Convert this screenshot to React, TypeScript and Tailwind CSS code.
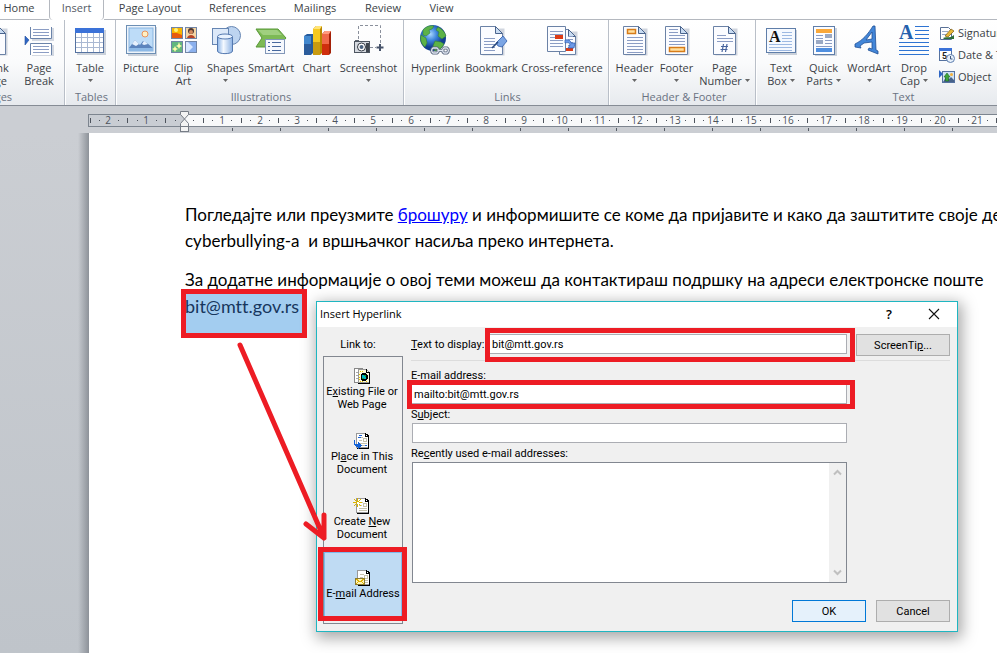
import type { ReactNode } from 'react';

function Svg({ children, w = 32 }: { children: ReactNode; w?: number }) {
  return (
    <svg width={w} height="32" viewBox={`0 0 ${w} 32`} className="shrink-0" aria-hidden="true">
      {children}
    </svg>
  );
}

function Sheet({ x = 5, y = 2, w = 22, h = 28 }: { x?: number; y?: number; w?: number; h?: number }) {
  return (
    <g transform="translate(-.5 .5)">
      <path d={`M${x + 2} ${y + 2}h${w}v${h - 1}h-${w}z`} fill="#9aa5b8" opacity=".45" />
      <path d={`M${x} ${y}h${w - 7}l7 7v${h - 7}h-${w}z`} fill="#fbfcff" stroke="#6b82a6" />
      <path d={`M${x + w - 7} ${y}v7h7z`} fill="#c9dcf2" stroke="#4a648d" />
    </g>
  );
}

function Lines({ x, y, w, n, gap = 3, c = '#8b9dc4' }: { x: number; y: number; w: number; n: number; gap?: number; c?: string }) {
  return (
    <g fill={c}>
      {Array.from({ length: n }, (_, i) => (
        <rect key={i} x={x} y={y + i * gap} width={w} height="1" />
      ))}
    </g>
  );
}

const icons = {
  blank: (
    <Svg><Sheet /></Svg>
  ),
  pageBreak: (
    <Svg>
      <rect x="9" y="4" width="22" height="13" fill="#a9b4c6" opacity=".5" />
      <rect x="9" y="21" width="22" height="11" fill="#a9b4c6" opacity=".5" />
      <path d="M7.500 3v11.500h21V3" fill="#fff" stroke="#6b84aa" />
      <Lines x={10} y={5} w={16} n={3} />
      <path d="M7.500 31V19.500h21V31" fill="#fff" stroke="#6b84aa" />
      <Lines x={10} y={22} w={16} n={3} />
      <path d="M2 12l4 4-4 5z" fill="#2f66c4" stroke="#1e4ea0" strokeWidth=".6" />
    </Svg>
  ),
  table: (
    <Svg>
      <rect x="3" y="6" width="29" height="25" fill="#9aa5b8" opacity=".5" />
      <rect x="1.500" y="4.500" width="28" height="24" fill="#fff" stroke="#5572a0" />
      <rect x="1" y="4" width="29" height="5" fill="#3b72d8" />
      <path d="M7.500 9v19M13.500 9v19M19.500 9v19M25.500 9v19M2 13.500h27M2 18.500h27M2 23.500h27" stroke="#a9b8d2" />
    </Svg>
  ),
  picture: (
    <Svg>
      <rect x="3" y="3" width="29" height="29" fill="#9aa5b8" opacity=".5" />
      <rect x="1.500" y="1.500" width="29" height="28" fill="#eef4fb" stroke="#6d8fb4" />
      <rect x="4" y="4" width="24" height="23" fill="#bddcf8" stroke="#88b4df" />
      <circle cx="20" cy="10" r="3" fill="#fff0c4" stroke="#e8935c" />
      <path d="M4 24l6-8 5 5 3-4 4 2 6 5v2H4z" fill="#5c84bd" />
      <path d="M7 20l3-4 4 4-3 2zM17 20l2-3 4 3-4 1z" fill="#e7f1fd" />
      <rect x="4" y="24" width="24" height="3" fill="#8db9e6" />
    </Svg>
  ),
  clipArt: (
    <Svg>
      <rect x="3.500" y="3.500" width="11" height="11" fill="#f8b500" stroke="#7185a6" />
      <path d="M4 9h5l5 2v3H4z" fill="#e65a10" /><circle cx="8" cy="6" r="2" fill="#fff27a" />
      <rect x="17.500" y="3.500" width="11" height="11" fill="#f5d6a4" stroke="#7185a6" />
      <circle cx="23" cy="7" r="3" fill="#4b3630" /><circle cx="23" cy="8" r="2" fill="#d48a5e" /><path d="M19 14c1-4 7-4 8 0z" fill="#b84225" />
      <rect x="3.500" y="17.500" width="11" height="11" fill="#63b77e" stroke="#7185a6" />
      <path d="M11 18l1 3 2 1-2 1-1 2-1-2-2-1 2-1zM7 22l1 2 2 1-2 1-1 2-1-2-2-1 2-1z" fill="#fffcaa" />
      <rect x="17.500" y="17.500" width="11" height="11" fill="#d7e7ff" stroke="#7185a6" />
      <path d="M20 18l5 5-5 5h8V18z" fill="#8bb0ed" />
    </Svg>
  ),
  shapes: (
    <Svg>
      <defs>
        <linearGradient id="cyl"><stop stopColor="#8db5e8" /><stop offset=".4" stopColor="#f4f9ff" /><stop offset="1" stopColor="#8eb3e4" /></linearGradient>
      </defs>
      <circle cx="21.500" cy="11.500" r="9" fill="#bdd4f0" stroke="#6686b3" />
      <rect x="2.500" y="4.500" width="16" height="16" fill="#dce9f9" stroke="#6686b3" />
      <path d="M7.500 13v14c0 3.500 15 3.500 15 0V13z" fill="url(#cyl)" stroke="#5479b0" />
      <ellipse cx="15" cy="12.500" rx="7.500" ry="2.500" fill="#e8f2fe" stroke="#5479b0" />
    </Svg>
  ),
  smartArt: (
    <Svg>
      <path d="M1 5h22l8 9-8 9H1l6-9z" fill="#7dba55" stroke="#599838" />
      <path d="M3 6h19l5 5H8z" fill="#a9d68a" opacity=".8" />
      <rect x="10.500" y="15.500" width="19" height="14" fill="#f5f8fd" stroke="#8297b8" />
      <Lines x={17} y={18} w={9} n={3} gap={4} c="#47689e" />
      <Lines x={13} y={18} w={2} n={3} gap={4} c="#47689e" />
    </Svg>
  ),
  chart: (
    <Svg>
      <path d="M3 12l3-2h6v19l-2 2H3z" fill="#245a9c" /><path d="M3 12h7v19H3z" fill="#4288ce" /><path d="M3 20h7v11H3z" fill="#2b5c9b" />
      <path d="M12 5l3-3h6v27l-2 2h-7z" fill="#b98600" /><path d="M12 5h7v26h-7z" fill="#f6c91f" /><path d="M12 18h7v13h-7z" fill="#c99b10" /><path d="M12 5l3-3h6l-2 3z" fill="#ffe476" />
      <path d="M21 10l3-3h6v22l-2 2h-7z" fill="#a32007" /><path d="M21 10h7v21h-7z" fill="#f0694a" /><path d="M21 20h7v11h-7z" fill="#cf2e0d" /><path d="M21 10l3-3h6l-2 3z" fill="#ff9b7f" />
    </Svg>
  ),
  screenshot: (
    <Svg>
      <path d="M5.500 15V1.500h22V20M17 23.500h6" fill="none" stroke="#8a909c" strokeDasharray="3 2" />
      <path d="M27 20v7M23.500 23.500h7" stroke="#46536a" strokeWidth="2" />
      <rect x="2" y="16" width="4" height="2" fill="#5f6670" />
      <rect x="1.500" y="17.500" width="15" height="11" fill="#d6dae0" stroke="#4d5560" />
      <rect x="13" y="19" width="3" height="9" fill="#3f464f" />
      <circle cx="8.500" cy="23" r="4" fill="#fff" stroke="#333a44" /><circle cx="8.500" cy="23" r="2" fill="#49617e" />
    </Svg>
  ),
  hyperlink: (
    <Svg>
      <defs>
        <radialGradient id="globe" cx=".4" cy=".35"><stop stopColor="#a9d7ff" /><stop offset=".5" stopColor="#3c84dc" /><stop offset="1" stopColor="#123f92" /></radialGradient>
      </defs>
      <circle cx="13" cy="14" r="13" fill="url(#globe)" />
      <path d="M3 6c3-4 8-5 11-4l-2 3-3 1 1 3-4 3-3-1zM1 11l5 3 1 5-2 4C1 20 0 15 1 11zM18 3c4 2 7 5 8 9l-4 3-4-3 1-4-3-2zM15 17l6 1 3 2c-2 4-5 6-9 7l-2-5z" fill="#5cb247" stroke="#2f7d2e" strokeWidth=".5" />
      <g fill="none" strokeLinecap="round">
        <path d="M13 24h4a3 3 0 010 5h-4a3 3 0 010-5zM24 24h3a3 3 0 010 5h-3a3 3 0 010-5zM18 26.500h5" stroke="#56637a" strokeWidth="3" />
        <path d="M13 24h4a3 3 0 010 5h-4a3 3 0 010-5zM24 24h3a3 3 0 010 5h-3a3 3 0 010-5zM18 26.500h5" stroke="#dfe6f2" strokeWidth="1.300" />
      </g>
    </Svg>
  ),
  bookmark: (
    <Svg>
      <Sheet x={5} />
      <Lines x={8} y={14} w={11} n={5} />
      <path d="M20 19l7-7 4 5-5 6-4-1z" fill="#7ba5e4" stroke="#2e5ba8" strokeWidth=".8" />
      <path d="M16 24l6-6" stroke="#27477d" strokeWidth="1.600" />
    </Svg>
  ),
  crossRef: (
    <Svg>
      <Sheet x={14} y={5} w={16} h={25} />
      <Lines x={22} y={12} w={5} n={4} />
      <rect x="20" y="24" width="7" height="3" fill="#dc3b16" />
      <path d="M1.500 2.500h18v25h-18z" fill="#fbfcff" stroke="#6b82a6" />
      <Lines x={4} y={7} w={13} n={6} />
      <rect x="9" y="11" width="8" height="4" fill="#dc3b16" />
      <path d="M19 16c5-1 6 2 6 3h4l-1 5h-6l2-3c0-2-2-3-5-2z" fill="#6d9ae8" stroke="#2c5bb0" strokeWidth=".7" />
    </Svg>
  ),
  header: (
    <Svg>
      <Sheet /><rect x="8.500" y="5.500" width="8" height="4" fill="#ffdf9e" stroke="#d67b18" strokeWidth="1.500" />
      <Lines x={8} y={13} w={16} n={6} />
    </Svg>
  ),
  footer: (
    <Svg>
      <Sheet /><Lines x={8} y={5} w={9} n={2} /><Lines x={8} y={11} w={16} n={4} />
      <rect x="8.500" y="23.500" width="15" height="4" fill="#ffdf9e" stroke="#d67b18" strokeWidth="1.500" />
    </Svg>
  ),
  pageNumber: (
    <Svg>
      <Sheet /><Lines x={8} y={11} w={9} n={1} /><Lines x={8} y={14} w={16} n={2} />
      <path d="M14.500 20l-1.500 8M18 20l-1.500 8M12 22.500h7M11.500 25.500h7" stroke="#49659e" strokeWidth="1.200" />
    </Svg>
  ),
  textBox: (
    <Svg>
      <rect x="3" y="6" width="29" height="25" fill="#9aa5b8" opacity=".5" />
      <rect x="1.500" y="4.500" width="29" height="24" fill="#f5f9ff" stroke="#5f7ea9" />
      <text x="4" y="18" className="font-['Liberation_Serif'] text-[16px] font-bold" fill="#111">A</text>
      <Lines x={17} y={8} w={10} n={4} c="#9db9e2" /><Lines x={4} y={20} w={23} n={3} c="#9db9e2" />
    </Svg>
  ),
  quickParts: (
    <Svg>
      <rect x="7" y="4" width="22" height="28" fill="#9aa5b8" opacity=".5" />
      <rect x="5.500" y="2.500" width="21" height="28" fill="#fbfcff" stroke="#5f7ea9" />
      <rect x="8" y="5" width="16" height="4" fill="#f9a83a" />
      <Lines x={8} y={11} w={7} n={2} /><rect x="17" y="10" width="7" height="4" fill="#9aa9c4" />
      <rect x="8" y="16" width="7" height="4" fill="#9aa9c4" /><Lines x={17} y={16} w={7} n={2} />
      <Lines x={8} y={22} w={16} n={1} /><rect x="8" y="24" width="16" height="4" fill="#4f8fe0" />
    </Svg>
  ),
  wordArt: (
    <Svg>
      <path d="M2 20c8-4 13-10 18-18h2l1 24 2 1v3l-10-4 1-2 3 1v-7l-8 1-4 3 1 2-6-1zM13 16l6-1V8z" fill="#4286d8" fillRule="evenodd" stroke="#1f4f96" strokeWidth=".8" />
    </Svg>
  ),
  dropCap: (
    <Svg>
      <text x="1" y="15" className="font-['Liberation_Serif'] text-[20px] font-bold" fill="#2460ad">A</text>
      <Lines x={17} y={2} w={14} n={4} gap={4} c="#2e74d2" /><Lines x={1} y={18} w={30} n={4} gap={4} c="#2e74d2" />
    </Svg>
  ),
};

function Caret() {
  return (
    <svg width="5" height="3" viewBox="0 0 5 3" className="shrink-0" aria-hidden="true">
      <path d="M0 0h5L2.500 3z" fill="#666" />
    </svg>
  );
}

type Tool = { icon: ReactNode; top: string; bottom?: string; menu?: boolean; width: string };

function ToolButton({ icon, top, bottom, menu, width }: Tool) {
  return (
    <button type="button" className={`${width} flex shrink-0 flex-col items-center whitespace-nowrap leading-[13px]`}>
      {icon}
      <span className="mt-[5px]">{top}</span>
      {(bottom || menu) && (
        <span className="flex h-[13px] items-center gap-[3px]">
          {bottom}
          {menu && <Caret />}
        </span>
      )}
    </button>
  );
}

function Group({ name, tools, className, children }: { name: string; tools: Tool[]; className: string; children?: ReactNode }) {
  return (
    <section aria-label={name} className={`${className} flex shrink-0 flex-col justify-between border-r border-[#b9bfc8] pb-[2px] pt-1 shadow-[1px_0_0_#fff]`}>
      <div className="flex">
        {tools.map((t) => <ToolButton key={t.top + t.bottom} {...t} />)}
        {children}
      </div>
      <h2 className="text-center leading-[13px] text-[#6a7282]">{name}</h2>
    </section>
  );
}

const tabs = [
  { name: 'Home', width: 'w-[49px] pr-[11px]' },
  { name: 'Insert', width: 'w-[55px]' },
  { name: 'Page Layout', width: 'w-[92px]' },
  { name: 'References', width: 'w-[83px]' },
  { name: 'Mailings', width: 'w-[72px]' },
  { name: 'Review', width: 'w-[64px]' },
  { name: 'View', width: 'w-[53px]' },
];

function Ribbon() {
  return (
    <header className="text-[11px] text-[#3b3f46]">
      <nav className="flex h-5 bg-white leading-4" aria-label="Ribbon tabs">
        {tabs.map((t) => (
          <button
            type="button"
            key={t.name}
            className={`${t.width} shrink-0 pb-1 text-center ${t.name === 'Insert' ? 'rounded-b-sm border-x border-[#b4b8bf] text-[#555b66]' : 'border-b border-[#b4b8bf]'}`}
          >
            {t.name}
          </button>
        ))}
        <div className="grow border-b border-[#b4b8bf]" />
      </nav>
      <div className="flex h-[86px] overflow-hidden border-b border-[#868c95] bg-gradient-to-b from-white via-[#fafbfc] to-[#e7eaee]">
        <Group name="Pages" className="-ml-[67px] w-[132px] pr-[3px] [&>div]:justify-end" tools={[
          { icon: icons.blank, top: 'Blank', bottom: 'Page', width: 'w-[45px]' },
          { icon: icons.pageBreak, top: 'Page', bottom: 'Break', width: 'w-[44px]' },
        ]} />
        <Group name="Tables" className="w-[51px] pl-[3px]" tools={[{ icon: icons.table, top: 'Table', menu: true, width: 'w-[44px]' }]} />
        <Group name="Illustrations" className="w-[288px] pl-[3px]" tools={[
          { icon: icons.picture, top: 'Picture', width: 'w-[44px]' },
          { icon: icons.clipArt, top: 'Clip', bottom: 'Art', width: 'w-[41px]' },
          { icon: icons.shapes, top: 'Shapes', menu: true, width: 'w-[43px]' },
          { icon: icons.smartArt, top: 'SmartArt', width: 'w-[48px]' },
          { icon: icons.chart, top: 'Chart', width: 'w-[43px]' },
          { icon: icons.screenshot, top: 'Screenshot', menu: true, width: 'w-[61px]' },
        ]} />
        <Group name="Links" className="w-[205px] pl-[3px]" tools={[
          { icon: icons.hyperlink, top: 'Hyperlink', width: 'w-[57px]' },
          { icon: icons.bookmark, top: 'Bookmark', width: 'w-[55px]' },
          { icon: icons.crossRef, top: 'Cross-reference', width: 'w-[86px]' },
        ]} />
        <Group name="Header & Footer" className="w-[147px] pl-1" tools={[
          { icon: icons.header, top: 'Header', menu: true, width: 'w-[43px]' },
          { icon: icons.footer, top: 'Footer', menu: true, width: 'w-[41px]' },
          { icon: icons.pageNumber, top: 'Page', bottom: 'Number', menu: true, width: 'w-[55px]' },
        ]} />
        <Group name="Text" className="w-[292px] pl-1" tools={[
          { icon: icons.textBox, top: 'Text', bottom: 'Box', menu: true, width: 'w-[42px]' },
          { icon: icons.quickParts, top: 'Quick', bottom: 'Parts', menu: true, width: 'w-[43px]' },
          { icon: icons.wordArt, top: 'WordArt', menu: true, width: 'w-[48px]' },
          { icon: icons.dropCap, top: 'Drop', bottom: 'Cap', menu: true, width: 'w-[42px]' },
        ]}>
          <div className="ml-1 flex flex-col whitespace-nowrap leading-[22px]">
            <button type="button" className="-mt-[2px] flex h-[22px] items-center gap-[3px]">
              <svg width="16" height="16" viewBox="0 0 16 16" aria-hidden="true">
                <path d="M1.500 2.500h8l3 3v9h-11z" fill="#fff" stroke="#5a7196" /><path d="M3 6.500h6M3 9.500h5" stroke="#9aaac6" />
                <path d="M6 11l6-7 3 2-6 6z" fill="#e9b838" stroke="#7a5a14" strokeWidth=".7" /><path d="M4 13c3-2 6 1 11-3v4H5z" fill="#2e6d38" />
              </svg>
              Signature Line
            </button>
            <button type="button" className="flex h-[22px] items-center gap-[3px]">
              <svg width="16" height="16" viewBox="0 0 16 16" aria-hidden="true">
                <rect x=".500" y="1.500" width="12" height="12" fill="#fff" stroke="#5572a0" /><rect y="1" width="13" height="3" fill="#3b72d8" />
                <text x="3" y="12" className="font-['Roboto'] text-[9px] font-bold" fill="#222">5</text>
                <circle cx="11.500" cy="11.500" r="4" fill="#e6f0fb" stroke="#5f7fae" /><path d="M11.500 9v3h2" fill="none" stroke="#41587f" />
              </svg>
              Date &amp; Time
            </button>
            <button type="button" className="flex h-[22px] items-center gap-[3px]">
              <svg width="16" height="16" viewBox="0 0 16 16" aria-hidden="true">
                <rect x="3.500" y="2.500" width="12" height="11" fill="#cfe2f5" stroke="#5572a0" /><path d="M4 13l3-5 3 2 2-2 3 3v2z" fill="#47628a" />
                <circle cx="12.500" cy="5.500" r="1.500" fill="#f5b13c" /><path d="M0 1l4 4-4 4z" fill="#2f66c4" /><path d="M8 4l3 4H9.500v4h-3V8H5z" fill="#3fa53a" stroke="#1d6b22" strokeWidth=".6" />
              </svg>
              Object
            </button>
          </div>
        </Group>
      </div>
    </header>
  );
}

const CM = 37.78;

function Ruler() {
  const origin = 96;
  const quarters = Array.from({ length: 100 }, (_, i) => i - 10);
  return (
    <div className="flex h-[27px] shrink-0 overflow-hidden pl-[88px] pt-1">
      <svg width="1400" height="23" className="shrink-0" role="img" aria-label="Ruler">
        <rect x=".500" y="4.500" width="1398" height="12" fill="#f8f9fa" stroke="#7d858f" />
        <rect x="1" y="5" width="95" height="11" fill="#c9cdd3" />
        {quarters.map((q) => {
          const x = Math.round(origin + (q * CM) / 4);
          if (q === 0) return null;
          if (q % 4 === 0)
            return (
              <text key={q} x={x} y="14" textAnchor="middle" fill="#4d535c" className="font-['Open_Sans'] text-[10px]">
                {Math.abs(q / 4)}
              </text>
            );
          return q % 2 === 0 ? (
            <rect key={q} x={x} y="8" width="1" height="5" fill="#4d535c" />
          ) : (
            <rect key={q} x={x} y="10" width="1" height="1" fill="#4d535c" />
          );
        })}
        {Array.from({ length: 24 }, (_, i) => (
          <rect key={i} x={144 + i * 48} y="18" width="1" height="3" fill="#555b64" />
        ))}
        <g fill="#f3f3f3" stroke="#777d86">
          <path d="M92.500 1.500h8v3l-4 4.500-4-4.500z" />
          <path d="M92.500 16.500v-3l4-4.500 4 4.500v3z" />
          <rect x="92.500" y="16.500" width="8" height="5" />
        </g>
      </svg>
    </div>
  );
}

function Mark({ inset }: { inset: string }) {
  return <span className={`${inset} pointer-events-none absolute z-10 border-[5px] border-[#ed1c24]`} />;
}

function MiniDoc({ children }: { children?: ReactNode }) {
  return (
    <svg width="18" height="16" viewBox="0 0 18 16" shapeRendering="crispEdges" aria-hidden="true">
      <path d="M3.500 .500h9l3 3v11h-12z" fill="#fff" stroke="#999" />
      <path d="M15.500 4v12M4 15.500h12" fill="none" stroke="#000" />
      <path d="M12.500 0v3.500h3M13.500 1l2 2" fill="none" stroke="#000" />
      <path d="M6 4.500h4M6 7.500h3M6 10.500h8M6 12.500h8" stroke="#c6c2ac" />
      <path d="M10.500 5.500h3v3h-3z" fill="none" stroke="#c6c2ac" />
      {children}
    </svg>
  );
}

const places = [
  {
    id: 'file',
    label: <>E<u>x</u>isting File or<br />Web Page</>,
    icon: (
      <svg width="18" height="16" viewBox="0 0 18 16" shapeRendering="crispEdges" aria-hidden="true">
        <path d="M1.500 .500h8v14h-8z" fill="#fff" stroke="#888" /><path d="M3 4.500h3M3 7.500h3M3 10.500h3" stroke="#aaa" />
        <path d="M5.500 1.500h8l3 3v10h-11z" fill="#fffbdc" stroke="#999" /><path d="M16.500 5v11M5 15.500h12M13.500 1v3.500h3" fill="none" stroke="#000" />
        <path d="M9 5h4v1h1v1h1v4h-1v1h-1v1H9v-1H8V6h1z" fill="#000" /><path d="M9 7h3v2h1v2h-2v-1H9z" fill="#00b7c8" /><path d="M11 7h2v2h-1zM9 10h2v1H9z" fill="#1ba334" />
        <path d="M7 3.500h1M9 3.500h1M7 13.500h1M9 13.500h1M13 13.500h1M6 6.500h1M6 9.500h1M6 11.500h1" stroke="#e8c400" />
      </svg>
    ),
  },
  {
    id: 'place',
    label: <>Pl<u>a</u>ce in This<br />Document</>,
    icon: <MiniDoc><path d="M6 2.500h3M5 4.500h3M12 12.500h2" stroke="#1c62d4" /><path d="M2 6v5h3v-2l4 3.500-4 3.500v-2H3l-2-3V8z" fill="#1261d6" /></MiniDoc>,
  },
  {
    id: 'new',
    label: <>Create <u>N</u>ew<br />Document</>,
    icon: <MiniDoc><path d="M0 4.500h9M4.500 0v9M1 1l7 7M8 1L1 8" stroke="#d9b400" /><path d="M4 4h2v2H4z" fill="#fff" /></MiniDoc>,
  },
  {
    id: 'mail',
    label: <>E-<u>m</u>ail Address</>,
    icon: <MiniDoc><path d="M1.500 8.500h9v6h-9z" fill="#fff6b8" stroke="#8a7a30" /><path d="M2 9l4 3 4-3M2 14l3-3M10 14l-3-3" fill="none" stroke="#e0b000" /></MiniDoc>,
  },
];

const field = 'block w-full border border-[#abadb3] bg-white px-[2px] outline-none';
const dialogButton = 'h-[22px] w-[74px] border text-center';

function HyperlinkDialog() {
  return (
    <div
      role="dialog"
      aria-labelledby="dlg-title"
      className="absolute left-[316px] top-[301px] w-[642px] border border-[#1fb6c1] bg-[#f0f0f0] font-['Roboto'] text-[11px] leading-[13px] text-black shadow-[2px_4px_14px_2px_rgba(0,0,0,0.35)]"
    >
      <div className="flex h-[25px] items-center bg-white pb-px pl-[3px] pr-[17px] font-['Open_Sans'] leading-4">
        <h1 id="dlg-title" className="grow">Insert Hyperlink</h1>
        <button type="button" aria-label="Help" className="mr-9 text-[13px] font-semibold">?</button>
        <button type="button" aria-label="Close">
          <svg width="12" height="12" viewBox="0 0 12 12"><path d="M1 1l10 10M11 1L1 11" stroke="#111" strokeWidth="1.100" /></svg>
        </button>
      </div>
      <div className="flex px-[6px] pb-[7px] pt-px">
        <div className="w-20">
          <p className="mb-[5px] mt-[10px] pr-[10px] text-center">Link to:</p>
          <div className="h-[268px] border border-[#828790]">
            {places.map((p) => (
              <button
                type="button"
                key={p.id}
                className={`relative flex h-[65px] w-full flex-col items-center justify-center gap-px whitespace-nowrap ${p.id === 'mail' ? 'border border-[#7ebaec] bg-[#bfdbf3]' : 'pr-[2px]'}`}
              >
                {p.icon}
                <span>{p.label}</span>
                {p.id === 'mail' && <Mark inset="-bottom-[5px] -left-[7px] -right-[6px] -top-[6px]" />}
              </button>
            ))}
          </div>
        </div>
        <div className="ml-2 flex grow flex-col pr-px">
          <div className="mt-[6px] flex h-[27px] items-start border-b border-[#dcdcdc]">
            <label htmlFor="display" className="mt-1 w-[78px] whitespace-nowrap"><u>T</u>ext to display:</label>
            <div className="relative grow">
              <input id="display" defaultValue="bit@mtt.gov.rs" className={`${field} h-5`} />
              <Mark inset="-bottom-[8px] -left-[4px] -right-2 -top-[6px]" />
            </div>
            <button type="button" className="ml-[9px] h-[22px] w-[94px] border border-[#adadad] bg-[#e1e1e1]">ScreenTi<u>p</u>...</button>
          </div>
          <div className="mr-[103px] flex flex-col">
            <label htmlFor="email" className="mt-[8px]">E-mail address:</label>
            <div className="relative mt-[2px]">
              <input id="email" defaultValue="mailto:bit@mtt.gov.rs" className={`${field} h-5`} />
              <Mark inset="-bottom-[5px] -left-[4px] -right-2 -top-[4px]" />
            </div>
            <label htmlFor="subject" className="mt-[4px]">S<u>u</u>bject:</label>
            <div className="mt-[2px] pl-px">
              <input id="subject" className={`${field} h-5`} />
            </div>
            <label htmlFor="recent" className="mt-[4px]">Re<u>c</u>ently used e-mail addresses:</label>
            <div className="ml-px mt-[2px] flex h-[121px] border border-[#828790] bg-white">
              <select id="recent" size={8} className="h-full grow bg-white outline-none" />
              <div className="flex w-[17px] flex-col items-center justify-between bg-[#f0f0f0] py-[6px]">
                <svg width="9" height="7" viewBox="0 0 9 7" aria-hidden="true"><path d="M1 5.500L4.500 2 8 5.500" fill="none" stroke="#bfbfbf" strokeWidth="2" /></svg>
                <svg width="9" height="7" viewBox="0 0 9 7" aria-hidden="true"><path d="M1 1.500L4.500 5 8 1.500" fill="none" stroke="#bfbfbf" strokeWidth="2" /></svg>
              </div>
            </div>
          </div>
          <div className="mt-[17px] flex justify-end gap-[10px]">
            <button type="button" className={`${dialogButton} border-[#0078d7] bg-[#e5f1fb]`}>OK</button>
            <button type="button" className={`${dialogButton} border-[#adadad] bg-[#e1e1e1]`}>Cancel</button>
          </div>
        </div>
      </div>
    </div>
  );
}

export default function App() {
  return (
    <div className="relative flex h-screen flex-col overflow-hidden bg-[#cbced3] font-['Open_Sans','Noto_Sans',sans-serif]">
      <Ribbon />
      <Ruler />
      <main className="flex grow">
        <div className="w-[89px] shrink-0 bg-gradient-to-b from-[#cbced3] to-[#bfc4ca]">
          <div className="ml-auto h-full w-[11px] bg-gradient-to-r from-transparent to-[#8d9299]" />
        </div>
        <article className="grow whitespace-nowrap bg-white pl-24 pt-[69px] font-['Lato','Noto_Sans',sans-serif] text-[17px] leading-[26px] text-black [font-variant-ligatures:none]">
          <p className="mb-[13px]">
            Погледајте или преузмите <a href="#brosura" className="text-[#0000ff] underline">брошуру</a> и информишите се коме да пријавите и како да заштитите своје дете од
            <br />
            cyberbullying-a&nbsp; и вршњачког насиља преко интернета.
          </p>
          <p>
            За додатне информације о овој теми можеш да контактираш подршку на адреси електронске поште
            <br />
            <span className="relative inline-block h-[41px] bg-[#a3cdf0] pr-1 text-lg leading-[26px] text-[#17365d]">
              bit@mtt.gov.rs
              <Mark inset="-inset-x-1 -inset-y-1" />
            </span>
          </p>
        </article>
      </main>
      <HyperlinkDialog />
      <svg className="pointer-events-none absolute left-0 top-0" width="400" height="600" aria-hidden="true">
        <path d="M240 345L324 538M306 524l18 14V515" fill="none" stroke="#ed1c24" strokeWidth="5" strokeLinecap="round" strokeLinejoin="round" />
      </svg>
    </div>
  );
}
